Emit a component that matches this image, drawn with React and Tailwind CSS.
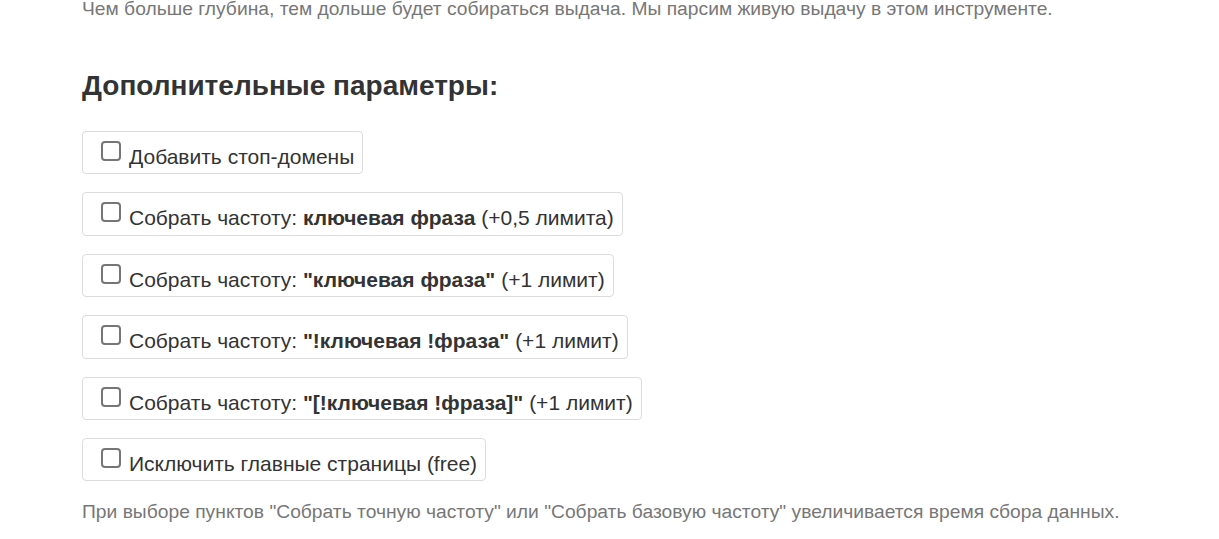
const options = [
  { label: 'Добавить стоп-домены' },
  { label: 'Собрать частоту: ', bold: 'ключевая фраза', tail: ' (+0,5 лимита)' },
  { label: 'Собрать частоту: ', bold: '"ключевая фраза"', tail: ' (+1 лимит)' },
  { label: 'Собрать частоту: ', bold: '"!ключевая !фраза"', tail: ' (+1 лимит)' },
  { label: 'Собрать частоту: ', bold: '"[!ключевая !фраза]"', tail: ' (+1 лимит)' },
  { label: 'Исключить главные страницы (free)' },
];

export default function App() {
  return (
    <div className="min-h-screen overflow-hidden bg-white pl-[82px] font-['Liberation_Sans',Arial,sans-serif] text-[#333]">
      <p className="-mt-[3px] text-[19.25px] leading-6 text-[#777]">
        Чем больше глубина, тем дольше будет собираться выдача. Мы парсим живую выдачу в этом инструменте.
      </p>

      <h3 className="mt-[49px] text-[28px] font-bold leading-8">Дополнительные параметры:</h3>

      <div className="mt-[29px] flex flex-col items-start gap-[18px]">
        {options.map((o, i) => (
          <label
            key={i}
            className="flex h-[43.4px] items-start gap-2 rounded-[4px] border border-[#dcdcdc] pl-[18px] pr-2 text-[21px]"
          >
            <span className="mt-[9px] h-5 w-5 shrink-0 rounded-[4px] border-2 border-[#767676] bg-white" />
            <span className="mt-[13px] whitespace-nowrap leading-6">
              {o.label}
              {o.bold && <b className="font-bold">{o.bold}</b>}
              {o.tail}
            </span>
          </label>
        ))}
      </div>

      <p className="mt-[19px] text-[19.25px] leading-6 text-[#777]">
        При выборе пунктов "Собрать точную частоту" или "Собрать базовую частоту" увеличивается время сбора данных.
      </p>
    </div>
  );
}
